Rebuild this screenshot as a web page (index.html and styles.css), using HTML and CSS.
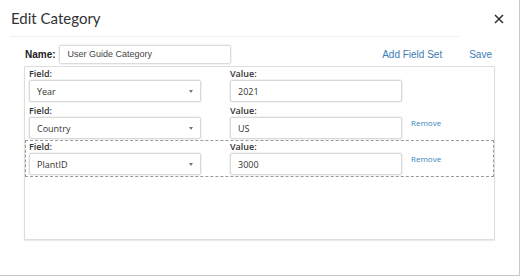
FILE: index.html
```html
<!DOCTYPE html>
<html lang="en">
  <head>
    <meta charset="UTF-8" />
    <meta name="viewport" content="width=device-width, initial-scale=1.0" />

    <title>Edit Category</title>

    <link rel="stylesheet" href="styles.css">
  </head>

  <body>
    <div class="modal">
      <div class="modal-header">
        <h1 class="title">Edit Category</h1>
        <svg class="close" width="10" height="10" viewBox="0 0 10 10">
          <path d="M1 1 L9 9 M9 1 L1 9" stroke="#333" stroke-width="1.6" fill="none" />
        </svg>
      </div>
      <div class="divider"></div>

      <div class="toolbar">
        <label class="name-label">Name:</label>
        <div class="name-input">User Guide Category</div>
        <div class="actions">
          <a class="link">Add Field Set</a>
          <a class="link">Save</a>
        </div>
      </div>

      <div class="field-box">
        <div class="field-row">
          <div class="group">
            <div class="label">Field:</div>
            <div class="select"><span>Year</span><i class="caret"></i></div>
          </div>
          <div class="group value">
            <div class="label">Value:</div>
            <div class="input">2021</div>
          </div>
        </div>

        <div class="field-row">
          <div class="group">
            <div class="label">Field:</div>
            <div class="select"><span>Country</span><i class="caret"></i></div>
          </div>
          <div class="group value">
            <div class="label">Value:</div>
            <div class="input">US</div>
          </div>
          <a class="remove">Remove</a>
        </div>

        <div class="field-row selected">
          <div class="group">
            <div class="label">Field:</div>
            <div class="select"><span>PlantID</span><i class="caret"></i></div>
          </div>
          <div class="group value">
            <div class="label">Value:</div>
            <div class="input">3000</div>
          </div>
          <a class="remove">Remove</a>
        </div>
      </div>
    </div>
  </body>
</html>
```

FILE: styles.css
```css
*,
*::before,
*::after {
  box-sizing: border-box;
}

body {
  margin: 0;
  background-color: white;
  color: #333;
  font-family: "Open Sans", "Liberation Sans", sans-serif;
}

.modal {
  width: 520px;
  height: 276px;
  border-right: 1px solid #c8c8c8;
  border-bottom: 1px solid #c8c8c8;
}

.modal-header {
  display: flex;
  justify-content: space-between;
  align-items: flex-start;
  height: 36px;
  padding: 7px 15px 0 11px;
}

.title {
  margin: 0;
  font-family: Lato, "Open Sans", sans-serif;
  font-size: 15px;
  font-weight: normal;
  line-height: 23px;
  color: #333;
}

.close {
  margin-top: 7px;
}

.divider {
  height: 1px;
  margin: 0 60px 0 10px;
  background-color: #eee;
}

.toolbar {
  display: flex;
  align-items: center;
  padding: 7px 27px 0 25px;
  height: 27px;
  font-family: "Liberation Sans", Arial, sans-serif;
  font-size: 10px;
}

.name-label {
  font-weight: bold;
  color: #222;
  margin-right: 3px;
}

.name-input {
  width: 172px;
  height: 19px;
  line-height: 17px;
  padding-left: 8px;
  border: 1px solid #dcdcdc;
  border-radius: 2px;
  box-shadow: 0 0 0 1px #f4f4f4;
  font-size: 9px;
  color: #444;
}

.actions {
  display: flex;
  gap: 27px;
  margin-left: auto;
}

.link {
  color: #3c7cb4;
}

.field-box {
  height: 174px;
  margin: 2px 24px 0;
  border: 1px solid #ddd;
  box-shadow: 0 1px 1px rgba(0, 0, 0, 0.08);
}

.field-row {
  display: flex;
  height: 37px;
  padding: 0 3px;
  border: 1px solid transparent;
}

.field-row.selected {
  margin-top: -1px;
  border: 1px dashed #999;
}

.group {
  width: 172px;
}

.group.value {
  margin-left: 29px;
}

.label {
  height: 12px;
  font-size: 9px;
  font-weight: 600;
  line-height: 12px;
  color: #333;
}

.select,
.input {
  display: flex;
  align-items: center;
  height: 22px;
  padding-left: 7px;
  border: 1px solid #d8d8d8;
  border-radius: 2px;
  box-shadow: 0 0 0 1px #f3f3f3;
  font-size: 9px;
  color: #333;
}

.select span {
  flex: 1;
}

.caret {
  width: 0;
  height: 0;
  margin-right: 7px;
  border-left: 2.5px solid transparent;
  border-right: 2.5px solid transparent;
  border-top: 3px solid #777;
}

.remove {
  margin: 12px 0 0 9px;
  font-size: 8px;
  line-height: 12px;
  color: #3a86bd;
}
```
